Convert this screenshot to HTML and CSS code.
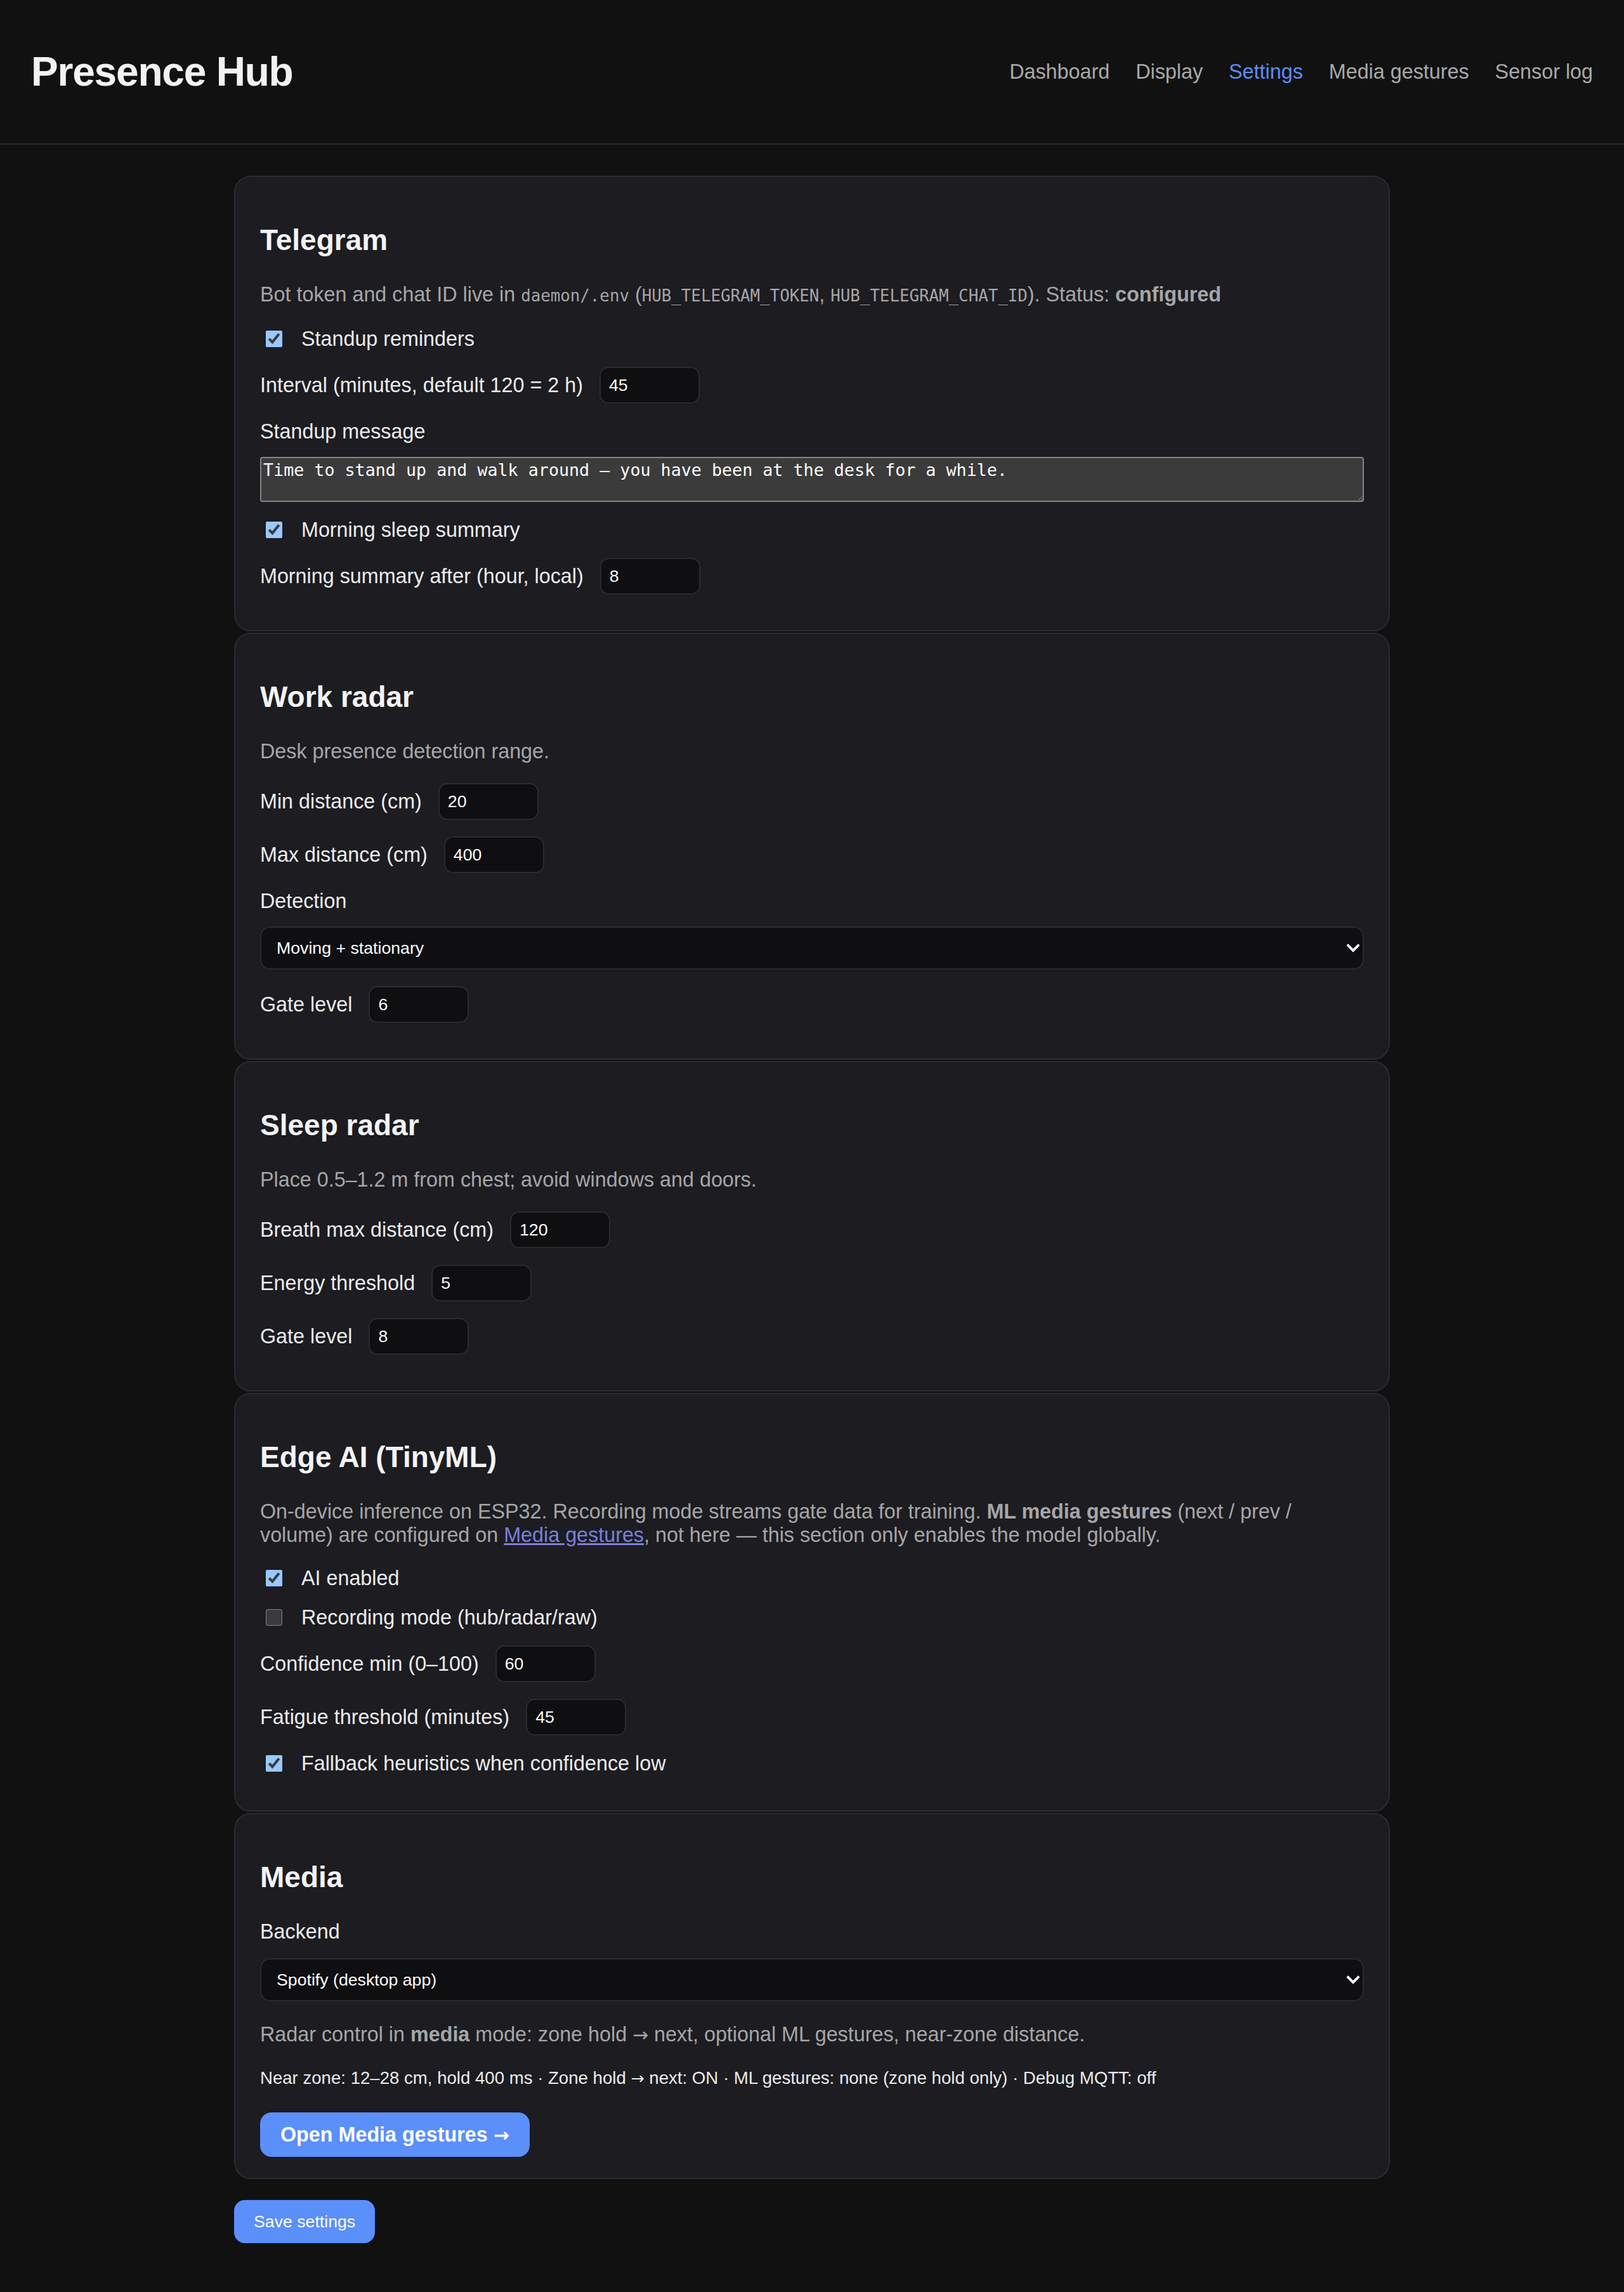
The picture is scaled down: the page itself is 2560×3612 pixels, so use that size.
FILE: index.html
```html
<!DOCTYPE html>
<html lang="en">
<head>
<meta charset="utf-8">
<title>Presence Hub — Settings</title>
<link rel="stylesheet" href="styles.css">
</head>
<body>
<header class="topbar">
  <h1 class="brand">Presence Hub</h1>
  <nav class="nav">
    <a href="#">Dashboard</a>
    <a href="#">Display</a>
    <a href="#" class="active">Settings</a>
    <a href="#">Media gestures</a>
    <a href="#">Sensor log</a>
  </nav>
</header>

<main class="page">
  <section class="card">
    <h2>Telegram</h2>
    <p class="desc">Bot token and chat ID live in <code>daemon/.env</code> (<code>HUB_TELEGRAM_TOKEN</code>, <code>HUB_TELEGRAM_CHAT_ID</code>). Status: <strong>configured</strong></p>
    <div class="fields">
      <label class="check"><input type="checkbox" checked><span>Standup reminders</span></label>
      <label class="field"><span>Interval (minutes, default 120 = 2 h)</span><input class="num" type="text" value="45"></label>
      <div class="stack">
        <label class="stack-label">Standup message</label>
        <textarea class="msg" rows="2">Time to stand up and walk around — you have been at the desk for a while.</textarea>
      </div>
      <label class="check"><input type="checkbox" checked><span>Morning sleep summary</span></label>
      <label class="field"><span>Morning summary after (hour, local)</span><input class="num" type="text" value="8"></label>
    </div>
  </section>

  <section class="card">
    <h2>Work radar</h2>
    <p class="desc">Desk presence detection range.</p>
    <div class="fields">
      <label class="field"><span>Min distance (cm)</span><input class="num" type="text" value="20"></label>
      <label class="field"><span>Max distance (cm)</span><input class="num" type="text" value="400"></label>
      <div class="stack">
        <label class="stack-label">Detection</label>
        <div class="select-wrap">
          <select class="select"><option>Moving + stationary</option></select>
          <svg class="chev" width="20" height="14" viewBox="0 0 20 14"><path d="M2 3 L10 11 L18 3" fill="none" stroke="#ffffff" stroke-width="4" stroke-linecap="square"/></svg>
        </div>
      </div>
      <label class="field"><span>Gate level</span><input class="num" type="text" value="6"></label>
    </div>
  </section>

  <section class="card">
    <h2>Sleep radar</h2>
    <p class="desc">Place 0.5–1.2 m from chest; avoid windows and doors.</p>
    <div class="fields">
      <label class="field"><span>Breath max distance (cm)</span><input class="num" type="text" value="120"></label>
      <label class="field"><span>Energy threshold</span><input class="num" type="text" value="5"></label>
      <label class="field"><span>Gate level</span><input class="num" type="text" value="8"></label>
    </div>
  </section>

  <section class="card">
    <h2>Edge AI (TinyML)</h2>
    <p class="desc">On-device inference on ESP32. Recording mode streams gate data for training. <strong>ML media gestures</strong> (next / prev / volume) are configured on <a class="link" href="#">Media gestures</a>, not here — this section only enables the model globally.</p>
    <div class="fields">
      <label class="check"><input type="checkbox" checked><span>AI enabled</span></label>
      <label class="check"><input type="checkbox"><span>Recording mode (hub/radar/raw)</span></label>
      <label class="field"><span>Confidence min (0–100)</span><input class="num" type="text" value="60"></label>
      <label class="field"><span>Fatigue threshold (minutes)</span><input class="num" type="text" value="45"></label>
      <label class="check"><input type="checkbox" checked><span>Fallback heuristics when confidence low</span></label>
    </div>
  </section>

  <section class="card card-media">
    <h2>Media</h2>
    <div class="fields">
      <div class="stack stack-media">
        <label class="stack-label">Backend</label>
        <div class="select-wrap">
          <select class="select"><option>Spotify (desktop app)</option></select>
          <svg class="chev" width="20" height="14" viewBox="0 0 20 14"><path d="M2 3 L10 11 L18 3" fill="none" stroke="#ffffff" stroke-width="4" stroke-linecap="square"/></svg>
        </div>
      </div>
      <p class="desc desc-media">Radar control in <strong>media</strong> mode: zone hold <span class="arrow">→</span> next, optional ML gestures, near-zone distance.</p>
      <p class="status">Near zone: 12–28 cm, hold 400 ms · Zone hold <span class="arrow">→</span> next: ON · ML gestures: none (zone hold only) · Debug MQTT: off</p>
      <div class="actions"><a class="btn btn-open" href="#">Open Media gestures <span class="arrow">→</span></a></div>
    </div>
  </section>

  <button class="btn btn-save" type="button">Save settings</button>
</main>
</body>
</html>
```

FILE: styles.css
```css
html {
  background: #111111;
  color-scheme: dark;
}

body {
  margin: 0;
  font-family: "Liberation Sans", Arial, sans-serif;
  font-size: 32.3px;
  color: #ececec;
}

.topbar {
  display: flex;
  align-items: center;
  justify-content: space-between;
  height: 226px;
  padding: 0 49px;
  border-bottom: 2px solid #2a2a30;
}

.brand {
  margin: 0;
  font-size: 64px;
  letter-spacing: -1.2px;
  line-height: 1;
  font-weight: 700;
  color: #f2f2f2;
}

.nav {
  display: flex;
  gap: 41px;
  font-size: 32.3px;
}

.nav a {
  color: #a9a9a9;
  text-decoration: none;
}

.nav a.active {
  color: #5b8ef7;
}

.page {
  width: 1822px;
  margin: 0 auto;
  padding: 49px 0 80px;
}

.card {
  background: #1c1c21;
  border: 2px solid #2a2a30;
  border-radius: 26px;
  padding: 72px 39px 56px;
  margin-bottom: 2px;
}

.card-media {
  padding-bottom: 33px;
}

.card h2 {
  margin: 0 0 40px;
  font-size: 46px;
  line-height: 55px;
  font-weight: 700;
  color: #f3f3f3;
}

.desc {
  margin: 0 0 31px;
  line-height: 37px;
  color: #a6a6a6;
}

.desc strong {
  font-weight: 700;
}

.desc code {
  font-family: "DejaVu Sans Mono", "Liberation Mono", monospace;
  font-size: 25.8px;
}

.arrow {
  font-family: "DejaVu Sans", sans-serif;
  font-size: 0.92em;
}

.link {
  color: #7d7ddb;
  text-decoration: underline;
}

.fields {
  display: flex;
  flex-direction: column;
  gap: 26px;
}

.check {
  display: flex;
  align-items: center;
  gap: 30px;
  line-height: 36px;
}

.check input {
  width: 26px;
  height: 26px;
  margin: 0 0 0 9px;
  flex: none;
}

.field {
  display: flex;
  align-items: center;
  gap: 26px;
  line-height: 36px;
}

.num {
  box-sizing: border-box;
  width: 158px;
  height: 58px;
  padding: 0 13px;
  background: #0f0f12;
  border: 2px solid #2a2a30;
  border-radius: 14px;
  color: #ffffff;
  font-family: "Liberation Sans", Arial, sans-serif;
  font-size: 26.7px;
  outline: none;
}

.stack {
  display: flex;
  flex-direction: column;
  gap: 22px;
}

.stack-media {
  gap: 24px;
}

.stack-label {
  line-height: 36px;
}

.msg {
  display: block;
  box-sizing: border-box;
  width: 100%;
  height: 71px;
  margin: 0;
  padding: 3px 3px;
  background: #3b3b3b;
  border: 2px solid #858585;
  border-radius: 4px;
  color: #ffffff;
  font-family: "DejaVu Sans Mono", "Liberation Mono", monospace;
  font-size: 26.7px;
  line-height: 31px;
  resize: vertical;
}

.select-wrap {
  position: relative;
}

.select {
  display: block;
  box-sizing: border-box;
  width: 100%;
  height: 68px;
  margin: 0;
  padding: 0 24px;
  appearance: none;
  -webkit-appearance: none;
  background: #0f0f12;
  border: 2px solid #2a2a30;
  border-radius: 16px;
  color: #ffffff;
  font-family: "Liberation Sans", Arial, sans-serif;
  font-size: 26.7px;
}

.chev {
  position: absolute;
  right: 7px;
  top: 27px;
}

.desc-media {
  margin: 8px 0 0;
}

.status {
  margin: 6px 0 0;
  font-size: 27.6px;
  line-height: 36px;
  color: #ececec;
}

.actions {
  margin-top: 10px;
  display: flex;
}

.btn {
  display: inline-flex;
  align-items: center;
  justify-content: center;
  box-sizing: border-box;
  border: none;
  background: #5b8ffa;
  color: #ffffff;
  text-decoration: none;
  font-family: "Liberation Sans", Arial, sans-serif;
}

.btn-open {
  height: 70px;
  padding: 0 32px;
  border-radius: 18px;
  font-size: 32.3px;
  font-weight: 700;
  white-space: pre;
}

.btn-save {
  margin-top: 31px;
  height: 68px;
  padding: 0 31px;
  border-radius: 17px;
  font-size: 26.7px;
  font-weight: 400;
}
```
